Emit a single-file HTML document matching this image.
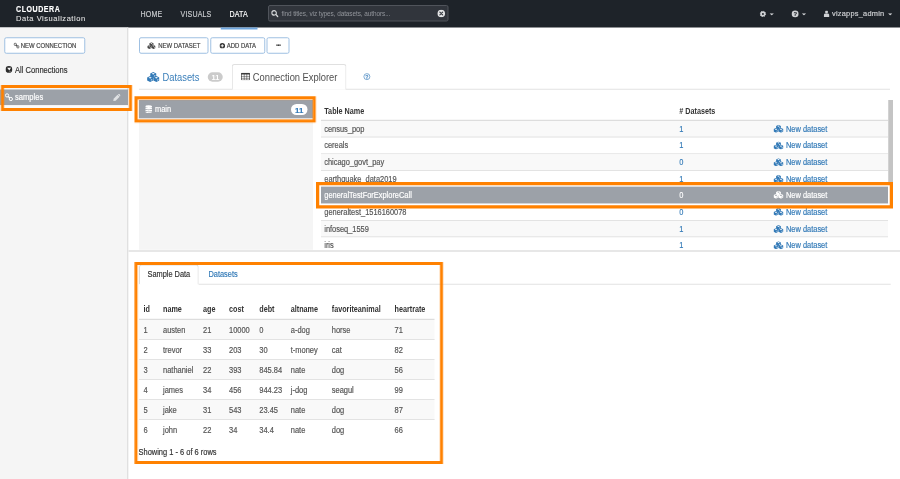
<!DOCTYPE html>
<html lang="en">
<head>
<meta charset="utf-8">
<title>Cloudera Data Visualization - Connection Explorer</title>
<style>
*{box-sizing:border-box;margin:0;padding:0}
html,body{width:900px;height:479px;overflow:hidden;background:#fff}
#root{position:absolute;left:0;top:0;width:900px;height:479px;zoom:4;transform:scale(.25);transform-origin:0 0}
body{font-family:"Liberation Sans",Arial,sans-serif;font-size:8.67px;color:#333;position:relative}
.abs{position:absolute}
.t{position:absolute;white-space:nowrap;line-height:1;backface-visibility:hidden;-webkit-text-stroke:.18px;transform:translateY(-50%) scaleX(var(--sx,.89));transform-origin:0 50%}
svg{position:absolute;display:block}

/* ---------- top navigation ---------- */
#nav{position:absolute;left:0;top:0;width:900px;height:27.4px;background:#1e2329}
#nav .brand1{left:16px;top:9.1px;font-size:8.4px;font-weight:bold;color:#fff;letter-spacing:.66px;--sx:.84}
#nav .brand2{left:16px;top:18.7px;font-size:7.5px;color:#e6e6e6;letter-spacing:.54px;--sx:1;-webkit-text-stroke:.06px}
#nav .item{top:14.4px;font-size:9.2px;color:#c9cbce;letter-spacing:.2px;--sx:.77}
#nav .item.on{color:#fff}
#navline{position:absolute;left:220.7px;top:27.4px;width:36.8px;height:2px;background:#6ea5dd}
#search{position:absolute;left:268px;top:5.1px;width:180.5px;height:16.3px;border:1px solid #50545b;border-radius:2px;background:#31353c}
#search .ph{left:12.6px;top:6.9px;font-size:7.9px;color:#92959b;letter-spacing:-.1px;--sx:.815;-webkit-text-stroke:0}
#nav .user{top:14.1px;font-size:7.7px;color:#d0d2d5;letter-spacing:.25px;--sx:.96}

/* ---------- sidebar ---------- */
#side{position:absolute;left:0;top:27.4px;width:128.2px;height:453px;background:#f5f5f5;border-right:1px solid #d9d9d9}
.btn{position:absolute;height:16.6px;border:1px solid #9fc0e2;border-radius:2px;background:#fff;top:37.2px}
.btn .t{top:7.5px;font-size:6.7px;color:#444;letter-spacing:0}
#sel-conn{position:absolute;left:0;top:89.4px;width:128px;height:15.8px;background:#9ca1a8}
#sel-conn-under{position:absolute;left:0;top:105.2px;width:128px;height:3px;background:#fbfbfb}

/* ---------- orange annotation boxes ---------- */
.hl{position:absolute;border:3.7px solid #ff8100;pointer-events:none}

/* ---------- main ---------- */
.tabline{position:absolute;height:1px;background:#e2e2e2}
#dbpanel{position:absolute;left:139px;top:100px;width:174px;height:149.7px;background:#f5f5f5}
#dbrow{position:absolute;left:0;top:.1px;width:174px;height:18.2px;background:#9ca1a8}
#tbl{position:absolute;left:321px;top:100px;width:566.9px;height:149.7px;overflow:hidden}
#tbl .hd{position:absolute;left:0;top:0;width:100%;height:21px;border-bottom:1.4px solid #ddd}
#tbl .r{position:absolute;left:0;width:100%;height:16.67px;border-bottom:1px solid #e3e3e3}
#tbl .r.odd{background:#f9f9f9}
#tbl .r.sel{background:#9ca1a8;border-bottom-color:#9ca1a8}
#tbl .r .t,#tbl .hd .t{font-size:8.35px}
#tbl .r .t{top:7.9px;color:#555}
#tbl .r .n,#tbl .r .a{color:#337ab7}
#tbl .r.sel .t{color:#fff}
#tbl .hd .t{top:11.3px;-webkit-text-stroke:0;font-weight:bold;color:#333;font-size:9.2px;--sx:.784}
.c1{left:3.2px}.c2{left:358.3px}.c3{left:465px}
#tbl .r svg{left:452.5px;top:3.9px}
#scroll{position:absolute;left:888.3px;top:100px;width:4.8px;height:83px;background:#c4c4c4}
#hdiv{position:absolute;left:128.6px;top:250.2px;width:772px;height:1.5px;background:#e0e0e0}

/* ---------- sample data ---------- */
#stab{position:absolute;left:139.1px;top:264.6px;width:59.7px;height:19.9px;border:1px solid #ddd;border-bottom:none;border-radius:2.5px 2.5px 0 0;background:#fff}
#sdata{position:absolute;left:139px;top:298px;width:295.6px}
#sdata .hd{position:absolute;left:0;top:0;width:100%;height:22px;border-bottom:1.4px solid #ddd}
#sdata .hd .t{top:10.9px;-webkit-text-stroke:0;font-weight:bold;color:#333;font-size:9.2px;--sx:.784}
#sdata .r{position:absolute;left:0;width:100%;height:20px;border-bottom:1px solid #e3e3e3}
#sdata .r.odd{background:#f9f9f9}
#sdata .r.last{border-bottom:none}
#sdata .r .t{top:9.8px;color:#555;font-size:8.4px}
.s1{left:4.4px}.s2{left:24px}.s3{left:63.9px}.s4{left:90px}.s5{left:120.2px}.s6{left:151.8px}.s7{left:192.8px}.s8{left:255.4px}
</style>
</head>
<body>
<div id="root">

<!-- ================= NAVBAR ================= -->
<div id="nav">
  <div class="t brand1">CLOUDERA</div>
  <div class="t brand2">Data Visualization</div>
  <div class="t item" style="left:140.6px">HOME</div>
  <div class="t item" style="left:180.6px">VISUALS</div>
  <div class="t item on" style="left:229.6px">DATA</div>
  <div id="search">
    <svg width="7.6" height="7.6" viewBox="0 0 16 16" style="left:2px;top:3.7px"><circle cx="6.6" cy="6.6" r="4.7" fill="none" stroke="#d4d6d8" stroke-width="2.4"/><path d="M10.2 10.2 L14.6 14.6" stroke="#d4d6d8" stroke-width="2.8" stroke-linecap="round"/></svg>
    <div class="t ph">find titles, viz types, datasets, authors...</div>
    <svg width="8" height="8" viewBox="0 0 16 16" style="left:168.2px;top:3.3px"><circle cx="8" cy="8" r="7.6" fill="#e4e5e6"/><path d="M5.2 5.2 L10.8 10.8 M10.8 5.2 L5.2 10.8" stroke="#31353c" stroke-width="2.2" stroke-linecap="round"/></svg>
  </div>
  <!-- gear -->
  <svg width="6.4" height="6.4" viewBox="0 0 16 16" style="left:759.8px;top:10.7px"><circle cx="8" cy="8" r="4.6" fill="none" stroke="#d0d2d5" stroke-width="4.4"/><circle cx="8" cy="8" r="7" fill="none" stroke="#d0d2d5" stroke-width="2.4" stroke-dasharray="2.6 2.9"/></svg>
  <svg width="4.4" height="2.4" viewBox="0 0 8 4" style="left:769.6px;top:13.2px"><path d="M0 0H8L4 4Z" fill="#d0d2d5"/></svg>
  <!-- help -->
  <div class="abs" style="left:791.8px;top:10.6px;width:6.6px;height:6.6px;border-radius:50%;background:#d0d2d5"></div><div class="t" style="left:793.4px;top:14.1px;font-size:6.2px;font-weight:bold;color:#1e2329;--sx:.95">?</div>
  <svg width="4.4" height="2.4" viewBox="0 0 8 4" style="left:801.8px;top:13.2px"><path d="M0 0H8L4 4Z" fill="#d0d2d5"/></svg>
  <!-- user -->
  <svg width="5.6" height="6.4" viewBox="0 0 14 16" style="left:823.8px;top:10.6px"><circle cx="7" cy="4" r="3.7" fill="#d0d2d5"/><path d="M0 16V11.5C0 9 2.4 7.6 4.4 7.6H9.6C11.6 7.6 14 9 14 11.5V16Z" fill="#d0d2d5"/></svg>
  <div class="t user" style="left:832px">vizapps_admin</div>
  <svg width="4.4" height="2.4" viewBox="0 0 8 4" style="left:888px;top:13.2px"><path d="M0 0H8L4 4Z" fill="#d0d2d5"/></svg>
</div>
<div id="navline"></div>

<!-- ================= SIDEBAR ================= -->
<div id="side"></div>
<div class="btn" style="left:4.2px;width:81px">
  <svg width="6.2" height="6.2" viewBox="0 0 16 16" style="left:8.2px;top:4.3px"><g fill="none" stroke="#444" stroke-width="2"><circle cx="4.4" cy="4.6" r="3.1"/><circle cx="11.6" cy="11.4" r="3.1"/><path d="M6.2 6.4L9.8 9.6" stroke-width="2.6"/></g></svg>
  <div class="t" style="left:15.6px">NEW CONNECTION</div>
</div>
<svg width="6.8" height="6.8" viewBox="0 0 16 16" style="left:5.6px;top:66.1px"><circle cx="8" cy="8" r="8" fill="#2b2b2b"/><path d="M4.2 4.4C6.6 3.4 10 4.2 13 3.4C12.4 6 10.6 8.2 9 10.6C7.6 8.6 5.2 7 4.2 4.4Z" fill="#f5f5f5"/><path d="M9.6 11.6C10.6 11.4 11.8 11.8 12.4 12.6C11.6 13.6 10.6 14.2 9.8 14.4Z" fill="#f5f5f5" opacity=".7"/></svg>
<div class="t" style="left:15px;top:69.9px;font-size:8.5px;color:#333;letter-spacing:0">All Connections</div>

<div id="sel-conn"></div>
<div id="sel-conn-under"></div>
<svg width="8.4" height="8.4" viewBox="0 0 16 16" style="left:4.8px;top:93.1px"><g fill="none" stroke="#fff" stroke-width="1.9"><circle cx="4.4" cy="4.6" r="3.1"/><circle cx="11.6" cy="11.4" r="3.1"/><path d="M6.2 6.4L9.8 9.6" stroke-width="2.4"/></g></svg>
<div class="t" style="left:15px;top:97.5px;font-size:8.6px;color:#fff;--sx:.88">samples</div>
<svg width="7.4" height="7.4" viewBox="0 0 16 16" style="left:113px;top:94px"><path d="M0.6 15.4L1.4 10.2L9.8 1.8L14.2 6.2L5.8 14.6Z" fill="#dfe1e3"/><path d="M10.8 0.9L11.8 0C12.4 -0.4 13.2 -0.4 13.8 0.2L15.8 2.2C16.4 2.8 16.4 3.6 16 4.2L15.1 5.2Z" fill="#dfe1e3"/></svg>
<div class="hl" style="left:0.9px;top:85px;width:131px;height:26px;border-width:3.2px"></div>

<!-- ================= MAIN: toolbar ================= -->
<div class="btn" style="left:139px;width:69.6px">
  <svg width="8.4" height="6.8" viewBox="0 0 25 20" style="left:7.2px;top:4px"><use href="#cubesd"/></svg>
  <div class="t" style="left:18.2px">NEW DATASET</div>
</div>
<div class="btn" style="left:210.2px;width:55px">
  <svg width="5.6" height="5.6" viewBox="0 0 16 16" style="left:8.2px;top:4.7px"><circle cx="8" cy="8" r="8" fill="#333"/><path d="M8 3.6V12.4M3.6 8H12.4" stroke="#fff" stroke-width="2.6"/></svg>
  <div class="t" style="left:15.6px">ADD DATA</div>
</div>
<div class="btn" style="left:266.6px;width:23px">
  <div class="t" style="left:8.6px;top:7px;font-size:5px;font-weight:bold;letter-spacing:-.1px;color:#333">•••</div>
</div>

<!-- ================= MAIN: tabs ================= -->
<div class="tabline" style="left:139px;top:88.8px;width:751px"></div>
<div class="abs" style="left:231.8px;top:63.9px;width:114.6px;height:25.9px;border:1px solid #e0e0e0;border-bottom:none;border-radius:2.6px 2.6px 0 0;background:#fff"></div>
<svg width="12.5" height="10" viewBox="0 0 25 20" style="left:147.1px;top:71.9px"><use href="#cubes"/></svg>
<div class="t" style="left:162.4px;top:77.2px;font-size:10.5px;color:#3a7fba;-webkit-text-stroke:0">Datasets</div>
<div class="abs" style="left:207.8px;top:72.3px;width:15px;height:9.5px;border-radius:4.8px;background:#cbcbcb"></div>
<div class="t" style="left:211.5px;top:77.3px;font-size:8px;font-weight:bold;color:#fff;--sx:.92;-webkit-text-stroke:0">11</div>
<svg width="9" height="7.6" viewBox="0 0 18 15" style="left:240.9px;top:72.7px"><rect x="0" y="0" width="18" height="15" rx="1.4" fill="#3a3a3a"/><g fill="#fff"><rect x="1.3" y="3.4" width="4.4" height="2.9"/><rect x="6.8" y="3.4" width="4.4" height="2.9"/><rect x="12.3" y="3.4" width="4.4" height="2.9"/><rect x="1.3" y="7.3" width="4.4" height="2.9"/><rect x="6.8" y="7.3" width="4.4" height="2.9"/><rect x="12.3" y="7.3" width="4.4" height="2.9"/><rect x="1.3" y="11.2" width="4.4" height="2.6"/><rect x="6.8" y="11.2" width="4.4" height="2.6"/><rect x="12.3" y="11.2" width="4.4" height="2.6"/></g></svg>
<div class="t" style="left:252.8px;top:77.2px;font-size:10.5px;color:#505050;-webkit-text-stroke:0">Connection Explorer</div>
<div class="abs" style="left:363.4px;top:73.3px;width:6.8px;height:6.8px;border-radius:50%;border:.9px solid #5590c6"></div><div class="t" style="left:365.2px;top:76.9px;font-size:5.6px;font-weight:bold;color:#5590c6;--sx:.95">?</div>

<!-- ================= MAIN: database list ================= -->
<div id="dbpanel">
  <div id="dbrow">
    <svg width="6.8" height="8.2" viewBox="0 0 14 16" style="left:6.2px;top:4.8px"><g fill="#fff"><ellipse cx="7" cy="2.8" rx="7" ry="2.8"/><path d="M0 4.6C1.4 6.4 12.6 6.4 14 4.6V7.4C12.6 9.4 1.4 9.4 0 7.4Z"/><path d="M0 8.8C1.4 10.6 12.6 10.6 14 8.8V11.6C12.6 13.6 1.4 13.6 0 11.6Z"/><path d="M0 13C1.4 14.8 12.6 14.8 14 13V14C12.6 16.6 1.4 16.6 0 14Z"/></g></svg>
    <div class="t" style="left:16px;top:9.2px;font-size:8.3px;color:#fff">main</div>
    <div class="abs" style="left:152.1px;top:3.9px;width:16.5px;height:11px;border-radius:5.5px;background:#fff"></div>
    <div class="t" style="left:156.1px;top:9.6px;font-size:8px;font-weight:bold;color:#337ab7;--sx:.98">11</div>
  </div>
</div>
<div class="hl" style="left:134.6px;top:96.3px;width:181.1px;height:26.3px;border-width:3.4px 3.1px 3.2px 3.4px"></div>

<!-- ================= MAIN: table list ================= -->
<div id="tbl">
  <div class="hd"><div class="t c1">Table Name</div><div class="t c2"># Datasets</div></div>
  <div class="r odd" style="top:20.9px"><div class="t c1">census_pop</div><div class="t c2 n">1</div><svg width="10" height="8" viewBox="0 0 25 20"><use href="#cubes"/></svg><div class="t c3 a">New dataset</div></div>
  <div class="r" style="top:37.57px"><div class="t c1">cereals</div><div class="t c2 n">1</div><svg width="10" height="8" viewBox="0 0 25 20"><use href="#cubes"/></svg><div class="t c3 a">New dataset</div></div>
  <div class="r odd" style="top:54.24px"><div class="t c1">chicago_govt_pay</div><div class="t c2 n">0</div><svg width="10" height="8" viewBox="0 0 25 20"><use href="#cubes"/></svg><div class="t c3 a">New dataset</div></div>
  <div class="r" style="top:70.91px"><div class="t c1">earthquake_data2019</div><div class="t c2 n">1</div><svg width="10" height="8" viewBox="0 0 25 20"><use href="#cubes"/></svg><div class="t c3 a">New dataset</div></div>
  <div class="r sel" style="top:86.85px;height:16.3px"><div class="t c1">generalTestForExploreCall</div><div class="t c2 n">0</div><svg width="10" height="8" viewBox="0 0 25 20"><use href="#cubesw"/></svg><div class="t c3 a">New dataset</div></div>
  <div class="r" style="top:103.95px;height:17.1px"><div class="t c1">generaltest_1516160078</div><div class="t c2 n">0</div><svg width="10" height="8" viewBox="0 0 25 20"><use href="#cubes"/></svg><div class="t c3 a">New dataset</div></div>
  <div class="r odd" style="top:121.05px;height:16.3px"><div class="t c1">infoseq_1559</div><div class="t c2 n">1</div><svg width="10" height="8" viewBox="0 0 25 20"><use href="#cubes"/></svg><div class="t c3 a">New dataset</div></div>
  <div class="r" style="top:137.29px"><div class="t c1">iris</div><div class="t c2 n">1</div><svg width="10" height="8" viewBox="0 0 25 20"><use href="#cubes"/></svg><div class="t c3 a">New dataset</div></div>
</div>
<div id="scroll"></div>
<div class="hl" style="left:316px;top:182.1px;width:577px;height:26.3px;border-width:3.4px"></div>
<div id="hdiv"></div>

<!-- ================= SAMPLE DATA ================= -->
<div class="tabline" style="left:198.4px;top:283.8px;width:692.4px"></div>
<div id="stab"></div>
<div class="t" style="left:147.5px;top:273.8px;font-size:8.3px;color:#333">Sample Data</div>
<div class="t" style="left:208.5px;top:273.8px;font-size:8.3px;color:#337ab7">Datasets</div>
<div id="sdata">
  <div class="hd"><div class="t s1">id</div><div class="t s2">name</div><div class="t s3">age</div><div class="t s4">cost</div><div class="t s5">debt</div><div class="t s6">altname</div><div class="t s7">favoriteanimal</div><div class="t s8">heartrate</div></div>
  <div class="r odd" style="top:22px"><div class="t s1">1</div><div class="t s2">austen</div><div class="t s3">21</div><div class="t s4">10000</div><div class="t s5">0</div><div class="t s6">a-dog</div><div class="t s7">horse</div><div class="t s8">71</div></div>
  <div class="r" style="top:42px"><div class="t s1">2</div><div class="t s2">trevor</div><div class="t s3">33</div><div class="t s4">203</div><div class="t s5">30</div><div class="t s6">t-money</div><div class="t s7">cat</div><div class="t s8">82</div></div>
  <div class="r odd" style="top:62px"><div class="t s1">3</div><div class="t s2">nathaniel</div><div class="t s3">22</div><div class="t s4">393</div><div class="t s5">845.84</div><div class="t s6">nate</div><div class="t s7">dog</div><div class="t s8">56</div></div>
  <div class="r" style="top:82px"><div class="t s1">4</div><div class="t s2">james</div><div class="t s3">34</div><div class="t s4">456</div><div class="t s5">944.23</div><div class="t s6">j-dog</div><div class="t s7">seagul</div><div class="t s8">99</div></div>
  <div class="r odd" style="top:102px"><div class="t s1">5</div><div class="t s2">jake</div><div class="t s3">31</div><div class="t s4">543</div><div class="t s5">23.45</div><div class="t s6">nate</div><div class="t s7">dog</div><div class="t s8">87</div></div>
  <div class="r last" style="top:122px"><div class="t s1">6</div><div class="t s2">john</div><div class="t s3">22</div><div class="t s4">34</div><div class="t s5">34.4</div><div class="t s6">nate</div><div class="t s7">dog</div><div class="t s8">66</div></div>
</div>
<div class="t" style="left:138.5px;top:452.2px;font-size:8.4px;color:#333">Showing 1 - 6 of 6 rows</div>
<div class="hl" style="left:134.4px;top:262.1px;width:308.7px;height:201.8px;border-width:3px"></div>

<!-- shared icon definitions -->
<svg width="0" height="0" style="left:0;top:0">
  <defs>
    <g id="cubes"><g transform="translate(12.5 5.8)"><path d="M0 -5.8L6 -2.9V3.2L0 6.2L-6 3.2V-2.9Z" fill="#337ab7"/><path d="M0 -3.9L3.3 -2.4L0 -0.9L-3.3 -2.4Z" fill="#fff"/><path d="M1.3 1.5L4.1 0.1V2.3L1.3 3.7Z" fill="#fff" opacity=".8"/></g><g transform="translate(6.3 13.8)"><path d="M0 -5.8L6 -2.9V3.2L0 6.2L-6 3.2V-2.9Z" fill="#337ab7"/><path d="M0 -3.9L3.3 -2.4L0 -0.9L-3.3 -2.4Z" fill="#fff"/><path d="M1.3 1.5L4.1 0.1V2.3L1.3 3.7Z" fill="#fff" opacity=".8"/></g><g transform="translate(18.7 13.8)"><path d="M0 -5.8L6 -2.9V3.2L0 6.2L-6 3.2V-2.9Z" fill="#337ab7"/><path d="M0 -3.9L3.3 -2.4L0 -0.9L-3.3 -2.4Z" fill="#fff"/><path d="M1.3 1.5L4.1 0.1V2.3L1.3 3.7Z" fill="#fff" opacity=".8"/></g></g>
    <g id="cubesw"><g transform="translate(12.5 5.8)"><path d="M0 -5.8L6 -2.9V3.2L0 6.2L-6 3.2V-2.9Z" fill="#fff"/><path d="M0 -3.9L3.3 -2.4L0 -0.9L-3.3 -2.4Z" fill="#9ca1a8"/><path d="M1.3 1.5L4.1 0.1V2.3L1.3 3.7Z" fill="#9ca1a8" opacity=".8"/></g><g transform="translate(6.3 13.8)"><path d="M0 -5.8L6 -2.9V3.2L0 6.2L-6 3.2V-2.9Z" fill="#fff"/><path d="M0 -3.9L3.3 -2.4L0 -0.9L-3.3 -2.4Z" fill="#9ca1a8"/><path d="M1.3 1.5L4.1 0.1V2.3L1.3 3.7Z" fill="#9ca1a8" opacity=".8"/></g><g transform="translate(18.7 13.8)"><path d="M0 -5.8L6 -2.9V3.2L0 6.2L-6 3.2V-2.9Z" fill="#fff"/><path d="M0 -3.9L3.3 -2.4L0 -0.9L-3.3 -2.4Z" fill="#9ca1a8"/><path d="M1.3 1.5L4.1 0.1V2.3L1.3 3.7Z" fill="#9ca1a8" opacity=".8"/></g></g>
    <g id="cubesd"><g transform="translate(12.5 5.8)"><path d="M0 -5.8L6 -2.9V3.2L0 6.2L-6 3.2V-2.9Z" fill="#444"/><path d="M0 -3.9L3.3 -2.4L0 -0.9L-3.3 -2.4Z" fill="#fff"/><path d="M1.3 1.5L4.1 0.1V2.3L1.3 3.7Z" fill="#fff" opacity=".8"/></g><g transform="translate(6.3 13.8)"><path d="M0 -5.8L6 -2.9V3.2L0 6.2L-6 3.2V-2.9Z" fill="#444"/><path d="M0 -3.9L3.3 -2.4L0 -0.9L-3.3 -2.4Z" fill="#fff"/><path d="M1.3 1.5L4.1 0.1V2.3L1.3 3.7Z" fill="#fff" opacity=".8"/></g><g transform="translate(18.7 13.8)"><path d="M0 -5.8L6 -2.9V3.2L0 6.2L-6 3.2V-2.9Z" fill="#444"/><path d="M0 -3.9L3.3 -2.4L0 -0.9L-3.3 -2.4Z" fill="#fff"/><path d="M1.3 1.5L4.1 0.1V2.3L1.3 3.7Z" fill="#fff" opacity=".8"/></g></g>
  </defs>
</svg>
</div>
</body>
</html>
